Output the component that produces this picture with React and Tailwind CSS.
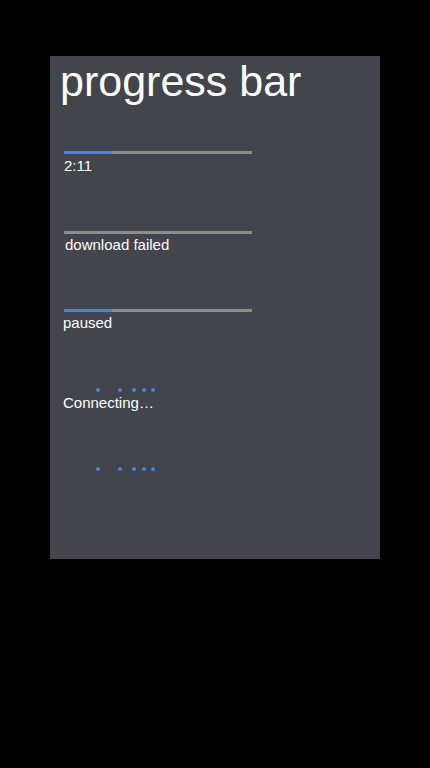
import React from "react";

function Bar({ value, className = "" }) {
  return (
    <div className={`ml-[14px] w-[188px] h-[3px] bg-[#8c8d8c] flex ${className}`}>
      {value > 0 && <div className="h-full bg-[#3b88e6]" style={{ width: `${value}%` }} />}
    </div>
  );
}

function Dots({ className = "" }) {
  return (
    <div className={`flex h-[4px] ${className}`}>
      <span className="ml-[46px] w-[4px] h-[4px] rounded-full bg-[#3b88e6]" />
      <span className="ml-[18px] w-[4px] h-[4px] rounded-full bg-[#3b88e6]" />
      <span className="ml-[10px] w-[4px] h-[4px] rounded-full bg-[#3b88e6]" />
      <span className="ml-[6px] w-[4px] h-[4px] rounded-full bg-[#3b88e6]" />
      <span className="ml-[5px] w-[4px] h-[4px] rounded-full bg-[#3b88e6]" />
    </div>
  );
}

export default function App() {
  return (
    <div
      className="w-[430px] h-[768px] bg-black pt-[56px] pl-[50px]"
      style={{ fontFamily: '"Liberation Sans", Arial, sans-serif' }}
    >
      <div className="w-[330px] h-[503px] bg-[#42454c] flex flex-col text-white">
        <h1 className="mt-[4px] ml-[10px] text-[43px] leading-[42px]">progress bar</h1>

        <Bar value={25.5} className="mt-[49px]" />
        <div className="mt-[3px] ml-[14px] text-[15px] leading-[17px]">2:11</div>

        <Bar value={0} className="mt-[57px]" />
        <div className="mt-[2px] ml-[15px] text-[15px] leading-[17px]">download failed</div>

        <Bar value={25.5} className="mt-[56px]" />
        <div className="mt-[2px] ml-[13px] text-[15px] leading-[17px]">paused</div>

        <Dots className="mt-[57px]" />
        <div className="mt-[2px] ml-[13px] text-[15px] leading-[17px]">Connecting…</div>

        <Dots className="mt-[56px]" />
      </div>
    </div>
  );
}
